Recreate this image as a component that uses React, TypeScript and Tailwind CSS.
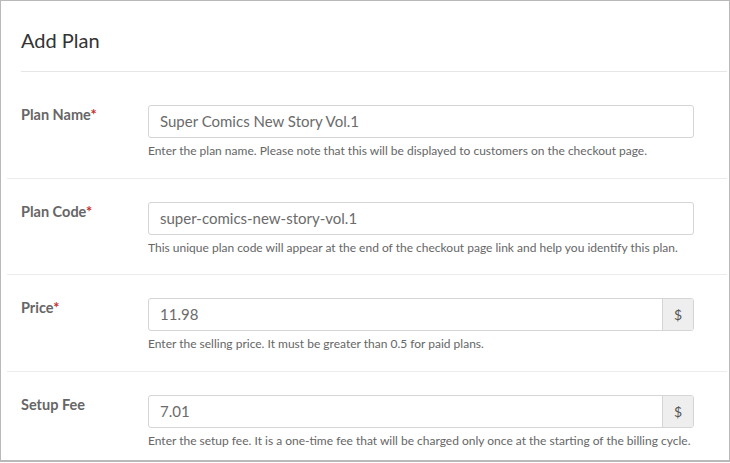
import React from "react";

type Row = {
  label: string;
  required: boolean;
  value: string;
  help: string;
  addon?: string;
};

const rows: Row[] = [
  {
    label: "Plan Name",
    required: true,
    value: "Super Comics New Story Vol.1",
    help: "Enter the plan name. Please note that this will be displayed to customers on the checkout page.",
  },
  {
    label: "Plan Code",
    required: true,
    value: "super-comics-new-story-vol.1",
    help: "This unique plan code will appear at the end of the checkout page link and help you identify this plan.",
  },
  {
    label: "Price",
    required: true,
    value: "11.98",
    help: "Enter the selling price. It must be greater than 0.5 for paid plans.",
    addon: "$",
  },
  {
    label: "Setup Fee",
    required: false,
    value: "7.01",
    help: "Enter the setup fee. It is a one-time fee that will be charged only once at the starting of the billing cycle.",
    addon: "$",
  },
];

export default function App() {
  return (
    <div
      className="w-[730px] h-[463px] bg-white overflow-hidden"
      style={{ fontFamily: "Lato, 'Open Sans', sans-serif" }}
    >
      <div className="w-[730px] h-[462px] border border-[#b9b9b9] border-b-2 pl-[6px] pr-[2px] flex flex-col overflow-hidden">
        <div className="shrink-0 ml-[14px] h-[71px] border-b border-[#e6e6e6] flex items-center">
          <h1 className="text-[20px] text-[#333] leading-none pt-[8px]">Add Plan</h1>
        </div>
        <div className="shrink-0 pt-[10px]">
          {rows.map((r, i) => (
            <div
              key={r.label}
              className={
                "flex pl-[14px] pt-[23px] pb-[18.5px] " +
                (i < rows.length - 1 ? "border-b border-[#ececec]" : "")
              }
            >
              <div className="w-[127px] shrink-0 text-[14.5px] font-bold text-[#666] leading-[20px]">
                {r.label}
                {r.required && <span className="text-[#c9302c]">*</span>}
              </div>
              <div className="w-[546px] flex flex-col">
                <div className="flex h-[33px] border border-[#d5d5d5] rounded-[3px] overflow-hidden">
                  <div className="flex-1 px-[11px] flex items-center text-[15px] text-[#6b6b6b]">
                    {r.value}
                  </div>
                  {r.addon && (
                    <div className="w-[31px] bg-[#eeeeee] border-l border-[#d5d5d5] flex items-center justify-center text-[14px] text-[#555]">
                      {r.addon}
                    </div>
                  )}
                </div>
                <div className="mt-[5px] text-[12px] text-[#666] leading-[16px] whitespace-nowrap">{r.help}</div>
              </div>
            </div>
          ))}
        </div>
      </div>
    </div>
  );
}
